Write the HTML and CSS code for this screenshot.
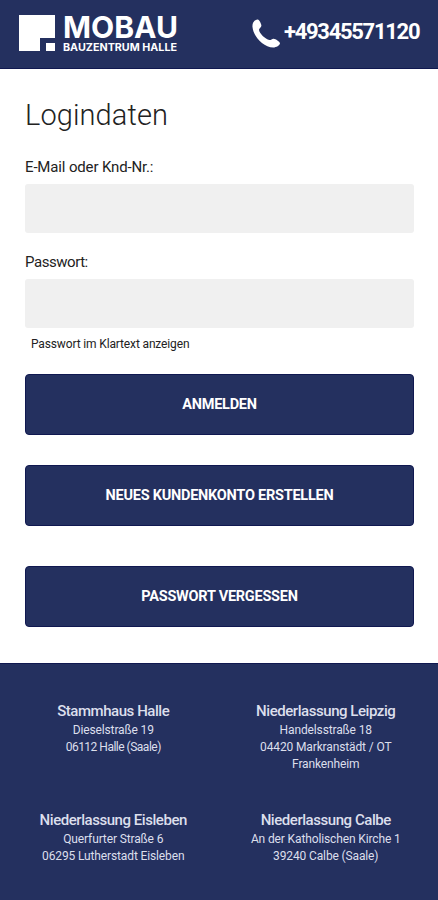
FILE: index.html
```html
<!DOCTYPE html>
<html lang="de">
<head>
<meta charset="utf-8">
<meta name="viewport" content="width=device-width, initial-scale=1">
<title>MOBAU Bauzentrum Halle – Login</title>
<link rel="stylesheet" href="styles.css">
</head>
<body>
<header class="header">
  <div class="brand">
    <svg class="brand-mark" viewBox="0 0 36 36"><path fill="#fff" d="M0 0h36v23H21v13H0z"/><path fill="#fff" d="M27 28h9v8h-9z"/></svg>
    <svg class="brand-name" viewBox="0 0 116 38">
      <text class="brand-title" x="0" y="23" textLength="115" lengthAdjust="spacingAndGlyphs">MOBAU</text>
      <text class="brand-sub" x="0" y="36" textLength="114" lengthAdjust="spacingAndGlyphs">BAUZENTRUM HALLE</text>
    </svg>
  </div>
  <div class="phone">
    <svg class="phone-icon" viewBox="0 0 28 29"><path fill="#fff" d="M1.200 3.500C2.500 1.500 4.300.3 5.800.5 7.300.8 9.100 4.300 9.400 6.400 9.600 8.200 7.200 9.300 7 10.800 7.200 14.300 13.300 20.200 17.400 21.100 19 21.300 20 19.600 21.600 19.700 23.800 20 27.600 22.500 28 24.200 28.100 26.300 24.300 28.600 21.300 28.600 11.500 28.300 1.200 17.400.5 8 .3 6.300.6 4.600 1.200 3.500z"/></svg>
    <span class="phone-number">+49345571120</span>
  </div>
</header>
<main class="login">
  <h1 class="title">Logindaten</h1>
  <label class="label label-mail" for="mail">E-Mail oder Knd-Nr.:</label>
  <input class="field" id="mail" type="text">
  <label class="label label-pass" for="pass">Passwort:</label>
  <input class="field" id="pass" type="password">
  <div class="hint">Passwort im Klartext anzeigen</div>
  <button class="button">ANMELDEN</button>
  <button class="button button-new">NEUES KUNDENKONTO ERSTELLEN</button>
  <button class="button button-forgot">PASSWORT VERGESSEN</button>
</main>
<footer class="footer">
  <address class="branch"><strong>Stammhaus Halle</strong>Dieselstraße 19<br><span class="tight">06112 Halle (Saale)</span></address>
  <address class="branch"><strong>Niederlassung Leipzig</strong>Handelsstraße 18<br>04420 Markranstädt / OT<br>Frankenheim</address>
  <address class="branch"><strong>Niederlassung Eisleben</strong>Querfurter Straße 6<br>06295 Lutherstadt Eisleben</address>
  <address class="branch"><strong>Niederlassung Calbe</strong>An der Katholischen Kirche 1<br>39240 Calbe (Saale)</address>
</footer>
</body>
</html>
```
FILE: styles.css
```css
* { box-sizing: border-box; }
body {
  margin: 0;
  min-height: 900px;
  display: flex;
  flex-direction: column;
  background: #fff;
  color: #222;
  font-family: Roboto, "Liberation Sans", sans-serif;
}
.header {
  height: 69px;
  padding: 15px 18px 0 19px;
  display: flex;
  justify-content: space-between;
  background: #24305f;
  border-bottom: 1px solid #101850;
  color: #fff;
}
.brand { display: flex; gap: 8px; }
.brand-mark { width: 36px; height: 36px; }
.brand-name { width: 116px; height: 38px; fill: #fff; overflow: visible; }
.brand-title { font: 700 30px Inter, sans-serif; }
.brand-sub { font: 700 11px Inter, sans-serif; }
.phone { display: flex; gap: 4px; padding-top: 4px; }
.phone-icon { width: 28px; height: 29px; }
.phone-number {
  font-size: 22px;
  font-weight: 700;
  line-height: 26px;
  letter-spacing: -1.3px;
  width: 136px;
  white-space: nowrap;
}
.login {
  height: 594px;
  padding: 27px 24px 0 25px;
  display: flex;
  flex-direction: column;
}
.title {
  margin: 0;
  font-size: 29px;
  font-weight: 300;
  line-height: 38px;
  letter-spacing: 0.1px;
}
.label { font-size: 15px; line-height: 20px; }
.label-mail { margin: 23px 0 7px; letter-spacing: -0.15px; }
.label-pass { margin: 19px 0 7px; letter-spacing: -0.45px; }
.field {
  width: 100%;
  height: 49px;
  border: 0;
  border-radius: 3px;
  background: #f0f0f0;
}
.hint {
  margin: 8px 0 22px 6px;
  font-size: 12px;
  line-height: 16px;
  letter-spacing: -0.14px;
}
.button {
  flex: none;
  height: 61px;
  padding: 0;
  border: 1px solid #101850;
  border-radius: 4px;
  background: #24305f;
  color: #fff;
  font: 700 14.5px/20px Roboto, sans-serif;
  letter-spacing: -0.24px;
}
.button-new { margin-top: 30px; }
.button-forgot { margin-top: 40px; }
.footer {
  flex: 1;
  padding: 37px 6px 0 7px;
  display: grid;
  grid-template-columns: 1fr 1fr;
  grid-template-rows: 109px auto;
  background: #24305f;
  border-top: 1px solid #101850;
  color: #dcdfec;
}
.branch {
  font-size: 12px;
  font-style: normal;
  line-height: 17px;
  letter-spacing: -0.13px;
  text-align: center;
}
.tight { letter-spacing: -0.5px; }
.branch strong {
  display: block;
  font-size: 15px;
  font-weight: 500;
  line-height: 21px;
  letter-spacing: -0.45px;
}
```
